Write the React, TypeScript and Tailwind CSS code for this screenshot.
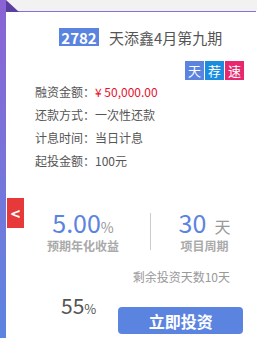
import React from "react";

const rows: { label: string; value: string; red?: boolean }[] = [
  { label: "融资金额：", value: "¥ 50,000.00", red: true },
  { label: "还款方式：", value: "一次性还款" },
  { label: "计息时间：", value: "当日计息" },
  { label: "起投金额：", value: "100元" },
];

const App: React.FC = () => {
  return (
    <div
      className="relative flex h-[338px] w-[257px] overflow-hidden bg-white"
      style={{ fontFamily: '"Noto Sans CJK SC", "Liberation Sans", sans-serif' }}
    >
      {/* left strip */}
      <div className="w-[6px] shrink-0 bg-gradient-to-b from-[#8a62d4] to-[#5b85e0]" />

      <div className="relative flex flex-1 flex-col">
        <div className="h-[11px] bg-[#f2f2f2]" />
        <div className="h-px w-[250px] bg-[#8a6fd8]" />
        <svg className="absolute left-0 top-0" width="13" height="12" viewBox="0 0 13 12">
          <polygon points="0,0 0,12 13,12" fill="#5a3ea0" />
        </svg>

        <div className="relative flex flex-1 flex-col border-r border-[#dcdcdc] mr-[1px]">
          {/* title */}
          <div className="mt-[16px] flex h-[18px] items-center pl-[53px]">
            <span className="flex h-[18px] w-[40px] items-center justify-center bg-[#5b84e0] text-[15px] font-bold leading-none text-white">
              2782
            </span>
            <span className="ml-[10px] text-[15px] leading-none text-[#555]">天添鑫4月第九期</span>
          </div>

          {/* tags */}
          <div className="mt-[15px] flex justify-end gap-px pr-[14px]">
            <span className="flex h-[19px] w-[19px] items-center justify-center bg-[#5b84e0] text-[13px] leading-none text-white">天</span>
            <span className="flex h-[19px] w-[19px] items-center justify-center bg-[#1b8de0] text-[13px] leading-none text-white">荐</span>
            <span className="flex h-[19px] w-[19px] items-center justify-center bg-[#e8286e] text-[13px] leading-none text-white">速</span>
          </div>

          {/* info */}
          <div className="flex flex-col pl-[29px]">
            {rows.map((r) => (
              <div key={r.label} className="flex h-[23px] items-center text-[12px] text-[#555]">
                <span>{r.label}</span>
                <span className={r.red ? "text-[#e8102a]" : ""}>{r.value}</span>
              </div>
            ))}
          </div>

          {/* stats */}
          <div className="mt-[36px] flex">
            <div className="ml-[10px] flex w-[134px] flex-col items-center">
              <div className="flex h-[27px] items-end leading-none">
                <span className="text-[25px] leading-[25px] text-[#5b84e0]">5.00</span>
                <span className="mb-[1px] text-[14px] leading-[14px] text-[#999]">%</span>
              </div>
              <span className="mt-[4px] text-[12px] font-bold leading-[14px] text-[#aaa]">预期年化收益</span>
            </div>
            <div className="mt-[5px] h-[37px] w-px bg-[#ccc]" />
            <div className="flex w-[107px] flex-col items-center">
              <div className="flex h-[27px] items-end leading-none">
                <span className="text-[25px] leading-[25px] text-[#5b84e0]">30</span>
                <span className="mb-[1px] ml-[8px] text-[16px] leading-[16px] text-[#999]">天</span>
              </div>
              <span className="mt-[4px] text-[12px] font-bold leading-[14px] text-[#aaa]">项目周期</span>
            </div>
          </div>

          {/* remaining */}
          <div className="mt-[16px] flex h-[16px] items-center justify-end pr-[28px] text-[12px] text-[#999]">
            剩余投资天数10天
          </div>

          {/* bottom */}
          <div className="flex items-start">
            <div className="ml-[55px] mt-[7px] flex h-[24px] items-end leading-none text-[#555]">
              <span className="text-[21px]">55</span>
              <span className="mb-[1px] text-[13px]">%</span>
            </div>
            <button className="ml-[22px] mt-[22px] flex h-[27px] w-[125px] items-center justify-center rounded-[4px] bg-[#5b84e0] text-[16px] font-bold leading-none text-white">
              立即投资
            </button>
          </div>

          {/* carousel arrow */}
          <div className="absolute left-[1px] top-[186px] flex h-[30px] w-[17px] items-center justify-center bg-[#e8393a] text-[16px] font-bold leading-none text-white">
            &lt;
          </div>
        </div>
      </div>
    </div>
  );
};

export default App;
